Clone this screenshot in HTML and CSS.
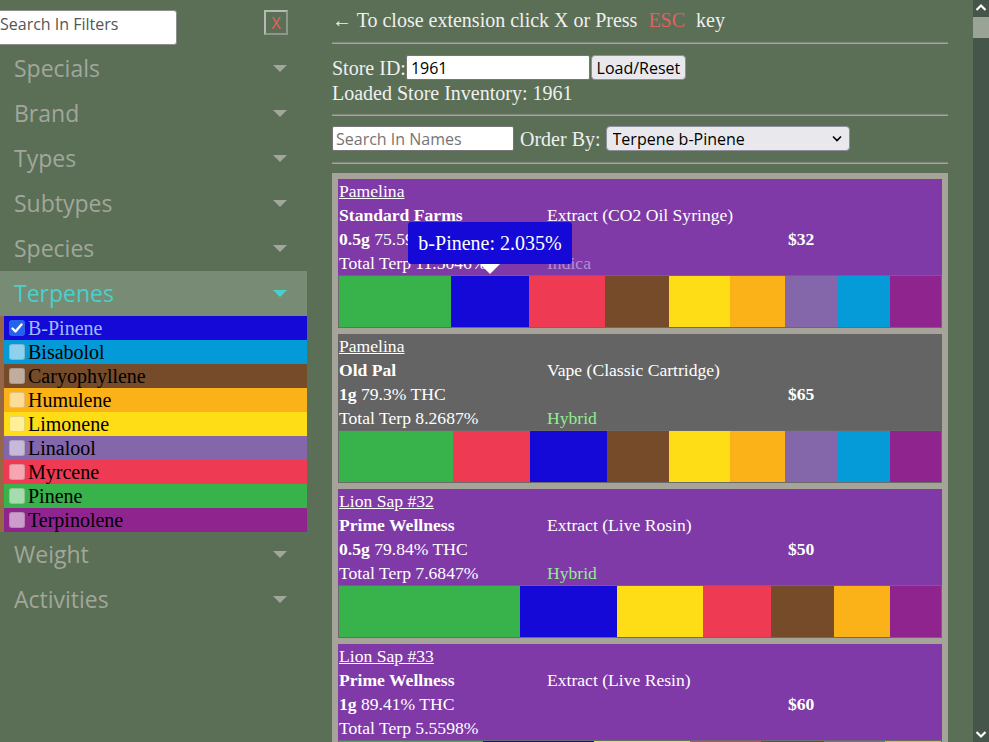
FILE: index.html
```html
<!DOCTYPE html>
<html lang="en">
<head>
<meta charset="utf-8">
<title>Inventory</title>
<link rel="stylesheet" href="styles.css">
</head>
<body>
<div class="app">
  <div class="page">
    <aside class="sidebar">
      <div class="filter-top">
        <input class="filter-search" type="text" placeholder="Search In Filters">
        <button class="close-btn" type="button">X</button>
      </div>
      <div class="fhead">Specials<span class="caret"></span></div>
      <div class="fhead">Brand<span class="caret"></span></div>
      <div class="fhead">Types<span class="caret"></span></div>
      <div class="fhead">Subtypes<span class="caret"></span></div>
      <div class="fhead">Species<span class="caret"></span></div>
      <div class="fhead active">Terpenes<span class="caret"></span></div>
      <ul class="terp-list">
        <li class="t-bpinene checked"><span class="cb"><svg viewBox="0 0 16 16" width="16" height="16"><path d="M3.5 8.5l3 3 6-7" fill="none" stroke="#fff" stroke-width="2.4" stroke-linecap="round" stroke-linejoin="round"/></svg></span>B-Pinene</li>
        <li class="t-bisabolol"><span class="cb"></span>Bisabolol</li>
        <li class="t-caryo"><span class="cb"></span>Caryophyllene</li>
        <li class="t-humulene"><span class="cb"></span>Humulene</li>
        <li class="t-limonene"><span class="cb"></span>Limonene</li>
        <li class="t-linalool"><span class="cb"></span>Linalool</li>
        <li class="t-myrcene"><span class="cb"></span>Myrcene</li>
        <li class="t-pinene"><span class="cb"></span>Pinene</li>
        <li class="t-terpinolene"><span class="cb"></span>Terpinolene</li>
      </ul>
      <div class="fhead">Weight<span class="caret"></span></div>
      <div class="fhead">Activities<span class="caret"></span></div>
    </aside>

    <main class="main">
      <div class="note">&larr; To close extension click X or Press <span class="esc">ESC</span> key</div>
      <hr class="sep sep1">
      <div class="store-row">
        <span>Store ID:</span><input class="store-input" type="text" value="1961"><button class="load-btn" type="button">Load/Reset</button>
      </div>
      <div class="loaded">Loaded Store Inventory: 1961</div>
      <hr class="sep sep2">
      <div class="search-row">
        <input class="name-search" type="text" placeholder="Search In Names">
        <span class="order-label">Order By:</span>
        <select class="order-select">
          <option>Terpene b-Pinene</option>
        </select>
      </div>
      <hr class="sep sep3">

      <div class="list">
        <div class="card purple">
          <div class="info">
            <a class="name" href="#">Pamelina</a>
            <b class="brand">Standard Farms</b><span class="type">Extract (CO2 Oil Syringe)</span>
            <span class="thc"><b>0.5g</b> 75.59% THC</span><span></span><b class="price">$32</b>
            <span>Total Terp 11.5046%</span><span class="indica">Indica</span>
          </div>
          <div class="bar">
            <span class="seg green" style="width:112px"></span>
            <span class="seg blue" style="width:78px"></span>
            <span class="seg red" style="width:76px"></span>
            <span class="seg brown" style="width:64px"></span>
            <span class="seg yellow" style="width:61px"></span>
            <span class="seg orange" style="width:55px"></span>
            <span class="seg lavender" style="width:53px"></span>
            <span class="seg cyan" style="width:52px"></span>
            <span class="seg magenta" style="width:51px"></span>
          </div>
          <div class="tooltip">b-Pinene: 2.035%</div>
        </div>

        <div class="card gray">
          <div class="info">
            <a class="name" href="#">Pamelina</a>
            <b class="brand">Old Pal</b><span class="type">Vape (Classic Cartridge)</span>
            <span class="thc"><b>1g</b> 79.3% THC</span><span></span><b class="price">$65</b>
            <span>Total Terp 8.2687%</span><span class="hybrid">Hybrid</span>
          </div>
          <div class="bar">
            <span class="seg green" style="width:114px"></span>
            <span class="seg red" style="width:77px"></span>
            <span class="seg blue" style="width:77px"></span>
            <span class="seg brown" style="width:62px"></span>
            <span class="seg yellow" style="width:61px"></span>
            <span class="seg orange" style="width:55px"></span>
            <span class="seg lavender" style="width:53px"></span>
            <span class="seg cyan" style="width:52px"></span>
            <span class="seg magenta" style="width:51px"></span>
          </div>
        </div>

        <div class="card purple">
          <div class="info">
            <a class="name" href="#">Lion Sap #32</a>
            <b class="brand">Prime Wellness</b><span class="type">Extract (Live Rosin)</span>
            <span class="thc"><b>0.5g</b> 79.84% THC</span><span></span><b class="price">$50</b>
            <span>Total Terp 7.6847%</span><span class="hybrid">Hybrid</span>
          </div>
          <div class="bar">
            <span class="seg green" style="width:181px"></span>
            <span class="seg blue" style="width:97px"></span>
            <span class="seg yellow" style="width:86px"></span>
            <span class="seg red" style="width:68px"></span>
            <span class="seg brown" style="width:63px"></span>
            <span class="seg orange" style="width:56px"></span>
            <span class="seg magenta" style="width:51px"></span>
          </div>
        </div>

        <div class="card purple">
          <div class="info">
            <a class="name" href="#">Lion Sap #33</a>
            <b class="brand">Prime Wellness</b><span class="type">Extract (Live Resin)</span>
            <span class="thc"><b>1g</b> 89.41% THC</span><span></span><b class="price">$60</b>
            <span>Total Terp 5.5598%</span><span></span>
          </div>
          <div class="bar">
            <span class="seg green" style="width:144px"></span>
            <span class="seg blue" style="width:111px"></span>
            <span class="seg yellow" style="width:96px"></span>
            <span class="seg red" style="width:71px"></span>
            <span class="seg brown" style="width:63px"></span>
            <span class="seg lavender" style="width:61px"></span>
            <span class="seg orange" style="width:56px"></span>
          </div>
        </div>
      </div>
    </main>
  </div>

  <div class="scrollbar">
    <span class="sb-btn"><svg viewBox="0 0 16 17" width="16" height="17"><path d="M3.5 10L8 5.5l4.5 4.5" fill="none" stroke="#fff" stroke-width="2.2"/></svg></span>
    <span class="sb-thumb"></span>
    <span class="sb-track"></span>
    <span class="sb-btn"><svg viewBox="0 0 16 17" width="16" height="17"><path d="M3.5 7l4.5 4.5L12.5 7" fill="none" stroke="#fff" stroke-width="2.2"/></svg></span>
  </div>
</div>
</body>
</html>
```
FILE: styles.css
```css
* { box-sizing: border-box; }

html, body {
  margin: 0;
  padding: 0;
  height: 100%;
  overflow: hidden;
  background: #5a6f56;
}

.app {
  display: flex;
  height: 100vh;
  overflow: hidden;
}

.page {
  flex: 1;
  display: flex;
  align-items: flex-start;
  overflow: hidden;
  background: #5a6f56;
}

/* ---------- Scrollbar ---------- */
.scrollbar {
  width: 16px;
  flex-shrink: 0;
  display: flex;
  flex-direction: column;
  background: #46554a;
}
.sb-btn { display: block; height: 17px; flex-shrink: 0; }
.sb-btn svg { display: block; }
.sb-thumb { display: block; height: 21px; background: #9aa396; flex-shrink: 0; }
.sb-track { display: block; flex: 1; }

/* ---------- Sidebar ---------- */
.sidebar {
  width: 307px;
  flex-shrink: 0;
}

.filter-top {
  height: 46px;
  display: flex;
  justify-content: space-between;
  align-items: flex-start;
  padding-top: 10px;
}

.filter-search {
  margin-left: -3px;
  width: 180px;
  height: 35px;
  padding: 0 0 8px 2px;
  border: 1px solid #8e8e8e;
  border-radius: 0 3px 3px 0;
  background: #fff;
  font-family: "Open Sans", "Noto Sans", sans-serif;
  font-size: 16px;
  color: #222;
  outline: none;
}
.filter-search::placeholder { color: #555; }

.close-btn {
  margin-right: 19px;
  width: 24px;
  height: 25px;
  padding: 0;
  border: 2px solid #b4bbb0;
  border-right-color: #8e978a;
  border-bottom-color: #8e978a;
  background: transparent;
  color: #e8625c;
  font-family: "Open Sans", "Noto Sans", sans-serif;
  font-size: 16px;
  line-height: 20px;
}

.fhead {
  height: 45px;
  line-height: 45px;
  padding-left: 14px;
  padding-right: 20px;
  font-family: "Open Sans", "Noto Sans", sans-serif;
  font-size: 23px;
  color: #a1a79b;
  display: flex;
  justify-content: space-between;
  align-items: center;
}
.fhead .caret {
  width: 0;
  height: 0;
  border-left: 7.5px solid transparent;
  border-right: 7.5px solid transparent;
  border-top: 7px solid #a1a79b;
  margin-top: -1px;
}
.fhead.active {
  background: #788c75;
  color: #48d1cc;
}
.fhead.active .caret { border-top-color: #48d1cc; }

.terp-list {
  list-style: none;
  margin: 0;
  padding: 0;
  border-left: 4px solid #956746;
}
.terp-list li {
  height: 24px;
  display: flex;
  align-items: center;
  padding-left: 5px;
  font-family: "Liberation Serif", "Times New Roman", serif;
  font-size: 20px;
  line-height: 24px;
  color: #000;
}
.cb {
  width: 16px;
  height: 16px;
  margin-right: 3px;
  border-radius: 3px;
  background: rgba(255, 255, 255, 0.55);
  box-shadow: inset 0 0 0 1px rgba(0, 0, 0, 0.12);
  display: inline-flex;
  flex-shrink: 0;
}
.terp-list li.checked { color: #9dbdff; }
.checked .cb {
  background: #2563ee;
  box-shadow: none;
}

.t-bpinene { background: #1409d6; }
.t-bisabolol { background: #049ad8; }
.t-caryo { background: #754b29; }
.t-humulene { background: #fbb118; }
.t-limonene { background: #fedd17; }
.t-linalool { background: #8466aa; }
.t-myrcene { background: #ee3a52; }
.t-pinene { background: #38b24a; }
.t-terpinolene { background: #8f248f; }

/* ---------- Main ---------- */
.main {
  width: 616px;
  margin-left: 25px;
  flex-shrink: 0;
  font-family: "Liberation Serif", "Times New Roman", serif;
  font-size: 20px;
  line-height: 24px;
  color: #f0f0f0;
}

.note { margin-top: 8px; height: 24px; }
.esc { color: #e35f5f; margin: 0 6px; }

.sep {
  display: block;
  height: 0;
  border: none;
  border-top: 1px solid #83877f;
  border-bottom: 1px solid #a2a69e;
}
.sep1 { margin: 10px 0 11px; }
.sep2 { margin: 9px 0 10px; }
.sep3 { margin: 11px 0 9px; }

.store-row {
  display: flex;
  align-items: center;
  height: 25px;
}
.store-input {
  width: 184px;
  height: 25px;
  padding: 0 4px;
  border: 1px solid #767676;
  border-radius: 2px;
  background: #fff;
  font-family: "Open Sans", "Noto Sans", sans-serif;
  font-size: 16px;
  color: #000;
}
.load-btn {
  width: 95px;
  height: 25px;
  margin-left: 1px;
  padding: 0;
  border: 1px solid #8f8f9d;
  border-radius: 4px;
  background: #e9e9ed;
  font-family: "Open Sans", "Noto Sans", sans-serif;
  font-size: 16px;
  color: #000;
}
.loaded { margin-top: 1px; height: 24px; }

.search-row {
  display: flex;
  align-items: center;
  height: 25px;
}
.name-search {
  width: 182px;
  height: 25px;
  padding: 0 3px;
  border: 1px solid #767676;
  border-radius: 2px;
  background: #fff;
  font-family: "Open Sans", "Noto Sans", sans-serif;
  font-size: 16px;
}
.name-search::placeholder { color: #757575; }
.order-label { margin-left: 6px; }
.order-select {
  margin-left: 5px;
  width: 244px;
  height: 25px;
  padding: 0 0 0 6px;
  border: 1px solid #8f8f9d;
  border-radius: 4px;
  appearance: none;
  -webkit-appearance: none;
  background: #e9e9ed url("data:image/svg+xml,%3Csvg xmlns='http://www.w3.org/2000/svg' width='10' height='7'%3E%3Cpath d='M1 1.5l4 4 4-4' fill='none' stroke='%23000' stroke-width='1.6'/%3E%3C/svg%3E") no-repeat right 7px center;
  font-family: "Open Sans", "Noto Sans", sans-serif;
  font-size: 16px;
  color: #000;
}

/* ---------- Cards ---------- */
.list {
  background: #a6a499;
  padding: 6px;
  display: flex;
  flex-direction: column;
  gap: 6px;
}

.card {
  position: relative;
  font-size: 17.6px;
  line-height: 24px;
  color: #fff;
}
.card.purple { background: #7f3aa7; }
.card.gray { background: #646464; }

.info {
  display: grid;
  grid-template-columns: 208px 241px 1fr;
  grid-auto-rows: 24px;
  padding-left: 1px;
}
.info .name {
  grid-column: 1 / -1;
  color: #fff;
  text-decoration: underline;
  justify-self: start;
}
.info .type { grid-column: 2 / 4; }
.indica { color: #b08fd2; }
.hybrid { color: #90ee90; }

.bar {
  display: flex;
  height: 53px;
  border: 1px solid #6a6a6a;
}
.seg { display: block; height: 100%; flex-shrink: 0; }
.green { background: #38b24a; }
.blue { background: #1409d6; }
.red { background: #ee3a52; }
.brown { background: #754b29; }
.yellow { background: #fedd17; }
.orange { background: #fbb118; }
.lavender { background: #8466aa; }
.cyan { background: #049bd8; }
.magenta { background: #8f248f; }

.tooltip {
  position: absolute;
  left: 70px;
  top: 43px;
  width: 164px;
  height: 42px;
  background: #1409d6;
  border-radius: 3px;
  color: #fff;
  font-size: 20px;
  line-height: 42px;
  text-align: center;
}
.tooltip::after {
  content: "";
  position: absolute;
  left: 72px;
  top: 42px;
  border-left: 10px solid transparent;
  border-right: 10px solid transparent;
  border-top: 10px solid #fff;
}
```
